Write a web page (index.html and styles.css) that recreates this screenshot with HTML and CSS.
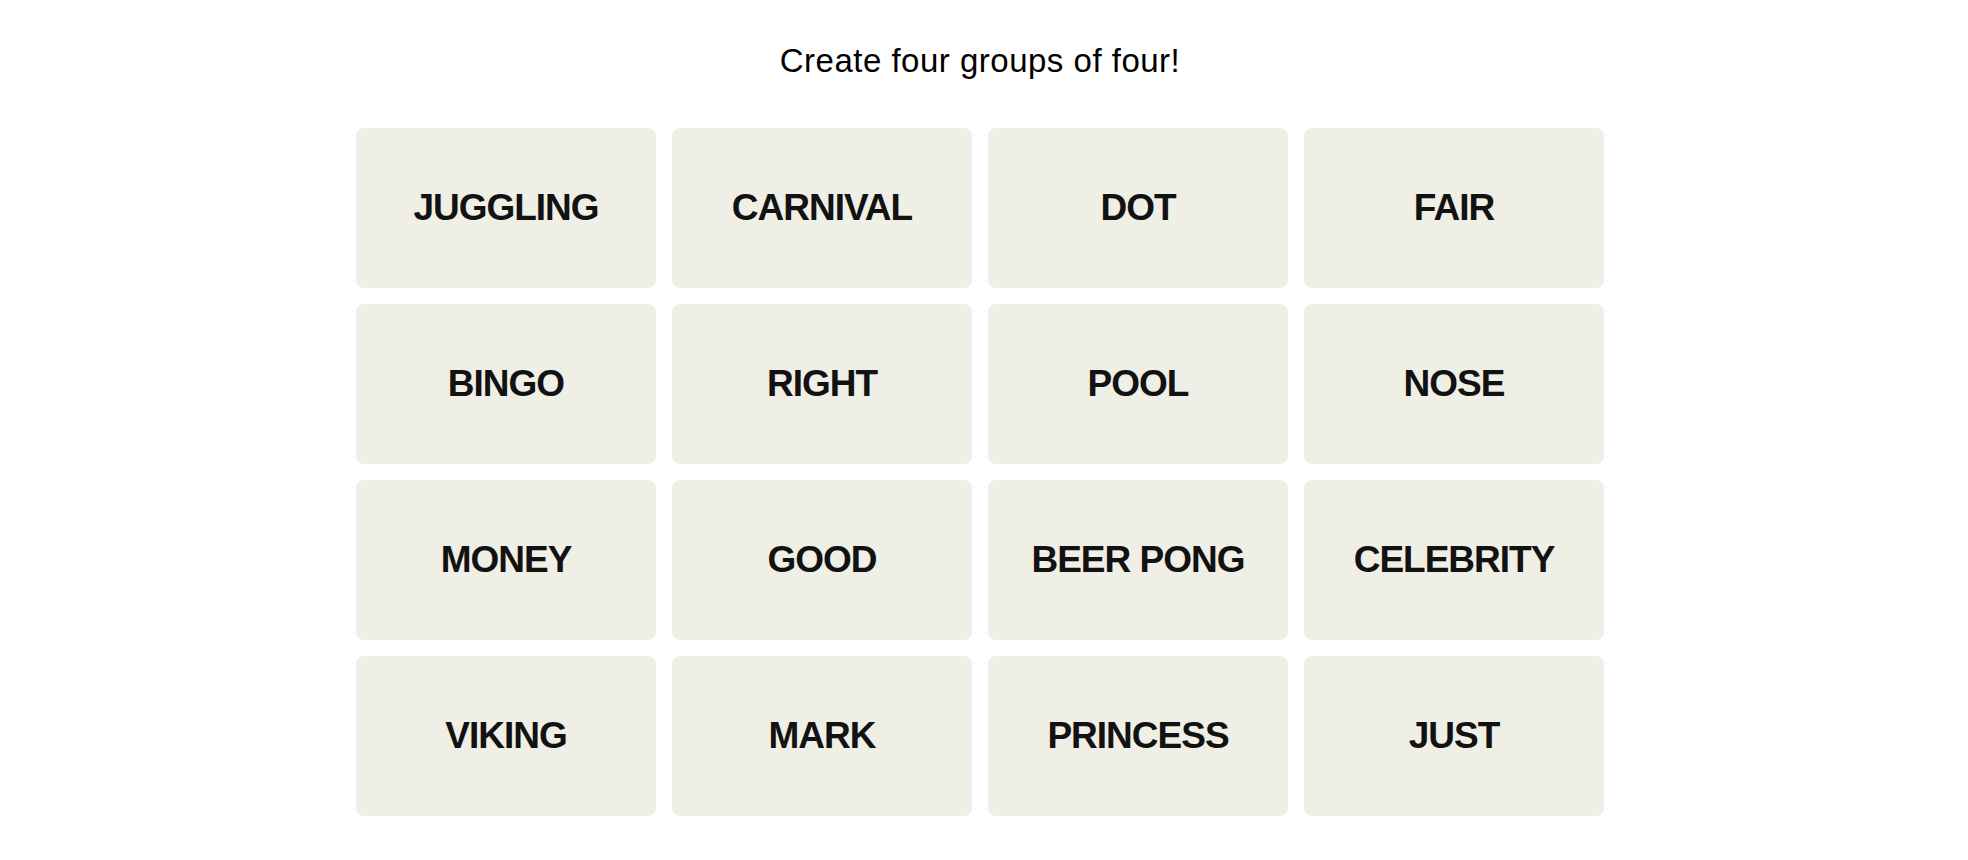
FILE: index.html
```html
<!DOCTYPE html>
<html lang="en">
<head>
<meta charset="utf-8">
<title>Connections</title>
<link rel="stylesheet" href="styles.css">
</head>
<body>
<main class="game">
  <h1 class="prompt">Create four groups of four!</h1>
  <div class="board">
    <button class="tile">JUGGLING</button>
    <button class="tile">CARNIVAL</button>
    <button class="tile">DOT</button>
    <button class="tile">FAIR</button>
    <button class="tile">BINGO</button>
    <button class="tile">RIGHT</button>
    <button class="tile">POOL</button>
    <button class="tile">NOSE</button>
    <button class="tile">MONEY</button>
    <button class="tile">GOOD</button>
    <button class="tile">BEER PONG</button>
    <button class="tile">CELEBRITY</button>
    <button class="tile">VIKING</button>
    <button class="tile">MARK</button>
    <button class="tile">PRINCESS</button>
    <button class="tile">JUST</button>
  </div>
</main>
</body>
</html>
```
FILE: styles.css
```css
html, body {
  margin: 0;
  padding: 0;
  background: #ffffff;
}
body {
  padding-right: 8px;
  font-family: "Liberation Sans", Arial, sans-serif;
  color: #121212;
}
.game {
  width: 1248px;
  margin: 0 auto;
  padding-top: 41px;
  display: flex;
  flex-direction: column;
  align-items: center;
}
.prompt {
  margin: 0 0 47px;
  font-size: 33px;
  line-height: 40px;
  font-weight: 400;
  color: #000;
  letter-spacing: 0.5px;
}
.board {
  display: grid;
  grid-template-columns: repeat(4, 300px);
  grid-auto-rows: 160px;
  gap: 16px;
}
.tile {
  border: none;
  border-radius: 8px;
  background: #efefe6;
  color: #121212;
  font-family: "Liberation Sans", Arial, sans-serif;
  font-weight: 700;
  font-size: 37px;
  letter-spacing: -1px;
  padding: 0;
  display: flex;
  align-items: center;
  justify-content: center;
  text-transform: uppercase;
}
```
